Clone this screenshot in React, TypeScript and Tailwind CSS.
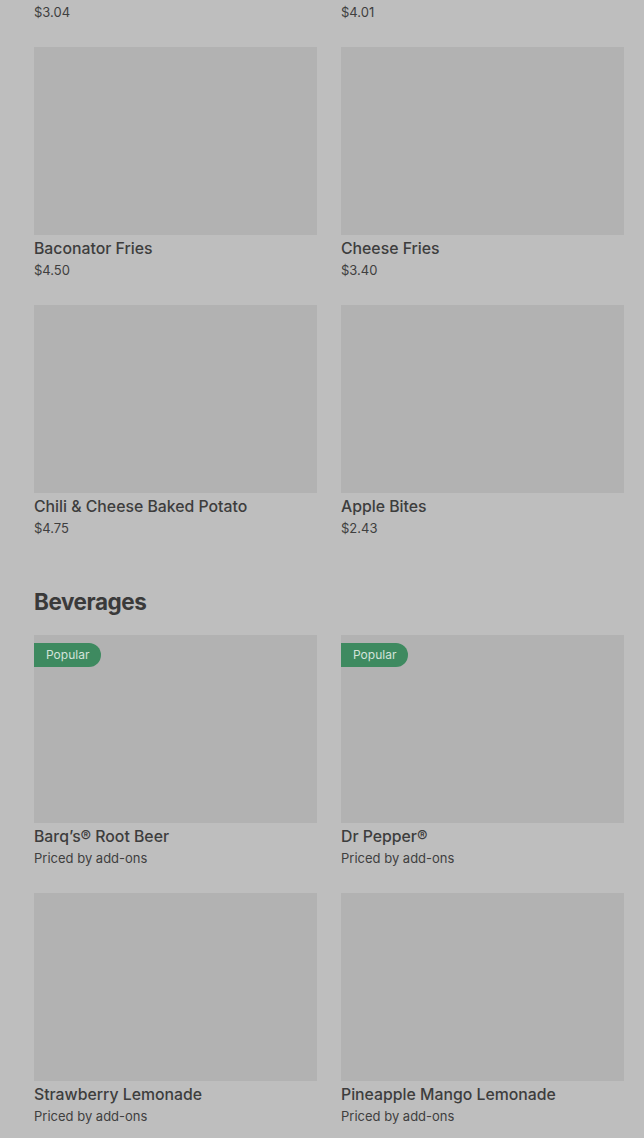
const rows: { name: string; price: string; popular?: boolean }[][] = [
  [
    { name: 'Crispy Chicken Sandwich', price: '$3.04' },
    { name: 'Classic Chicken Nuggets', price: '$4.01' },
  ],
  [
    { name: 'Baconator Fries', price: '$4.50' },
    { name: 'Cheese Fries', price: '$3.40' },
  ],
  [
    { name: 'Chili & Cheese Baked Potato', price: '$4.75' },
    { name: 'Apple Bites', price: '$2.43' },
  ],
]

const beverages: { name: string; price: string; popular?: boolean }[][] = [
  [
    { name: 'Barq’s® Root Beer', price: 'Priced by add-ons', popular: true },
    { name: 'Dr Pepper®', price: 'Priced by add-ons', popular: true },
  ],
  [
    { name: 'Strawberry Lemonade', price: 'Priced by add-ons' },
    { name: 'Pineapple Mango Lemonade', price: 'Priced by add-ons' },
  ],
]

function ItemCard({ name, price, popular }: { name: string; price: string; popular?: boolean }) {
  return (
    <div className="flex flex-col">
      <div className="relative h-[188px] bg-[#b2b2b2]">
        {popular && (
          <span className="absolute left-0 top-2 flex h-6 items-center rounded-r-full bg-[#3e8a60] pl-3 pr-3 text-[12px] text-[#d3e3da]">
            Popular
          </span>
        )}
      </div>
      <div className="flex h-6 items-center pt-1 text-[15.8px] font-medium text-[#3d3d3d]">{name}</div>
      <div className="flex h-[23px] items-center pt-[1px] text-[13px] text-[#3f3f3f]">{price}</div>
    </div>
  )
}

function Grid({ items }: { items: { name: string; price: string; popular?: boolean }[][] }) {
  return (
    <div className="flex flex-col gap-[23px]">
      {items.map((row, i) => (
        <div key={i} className="grid grid-cols-2 gap-6">
          {row.map((it) => (
            <ItemCard key={it.name} {...it} />
          ))}
        </div>
      ))}
    </div>
  )
}

export default function App() {
  return (
    <div
      className="h-[1138px] overflow-hidden bg-[#bebebe] pl-[34px] pr-5"
      style={{ fontFamily: 'Inter, "Noto Sans", sans-serif' }}
    >
      <div className="mt-[-211px]">
        <Grid items={rows} />
        <h2 className="mb-[17px] mt-[46px] flex h-8 items-center text-[22.5px] font-bold tracking-[-0.02em] text-[#3a3a3a]">
          Beverages
        </h2>
        <Grid items={beverages} />
      </div>
    </div>
  )
}
